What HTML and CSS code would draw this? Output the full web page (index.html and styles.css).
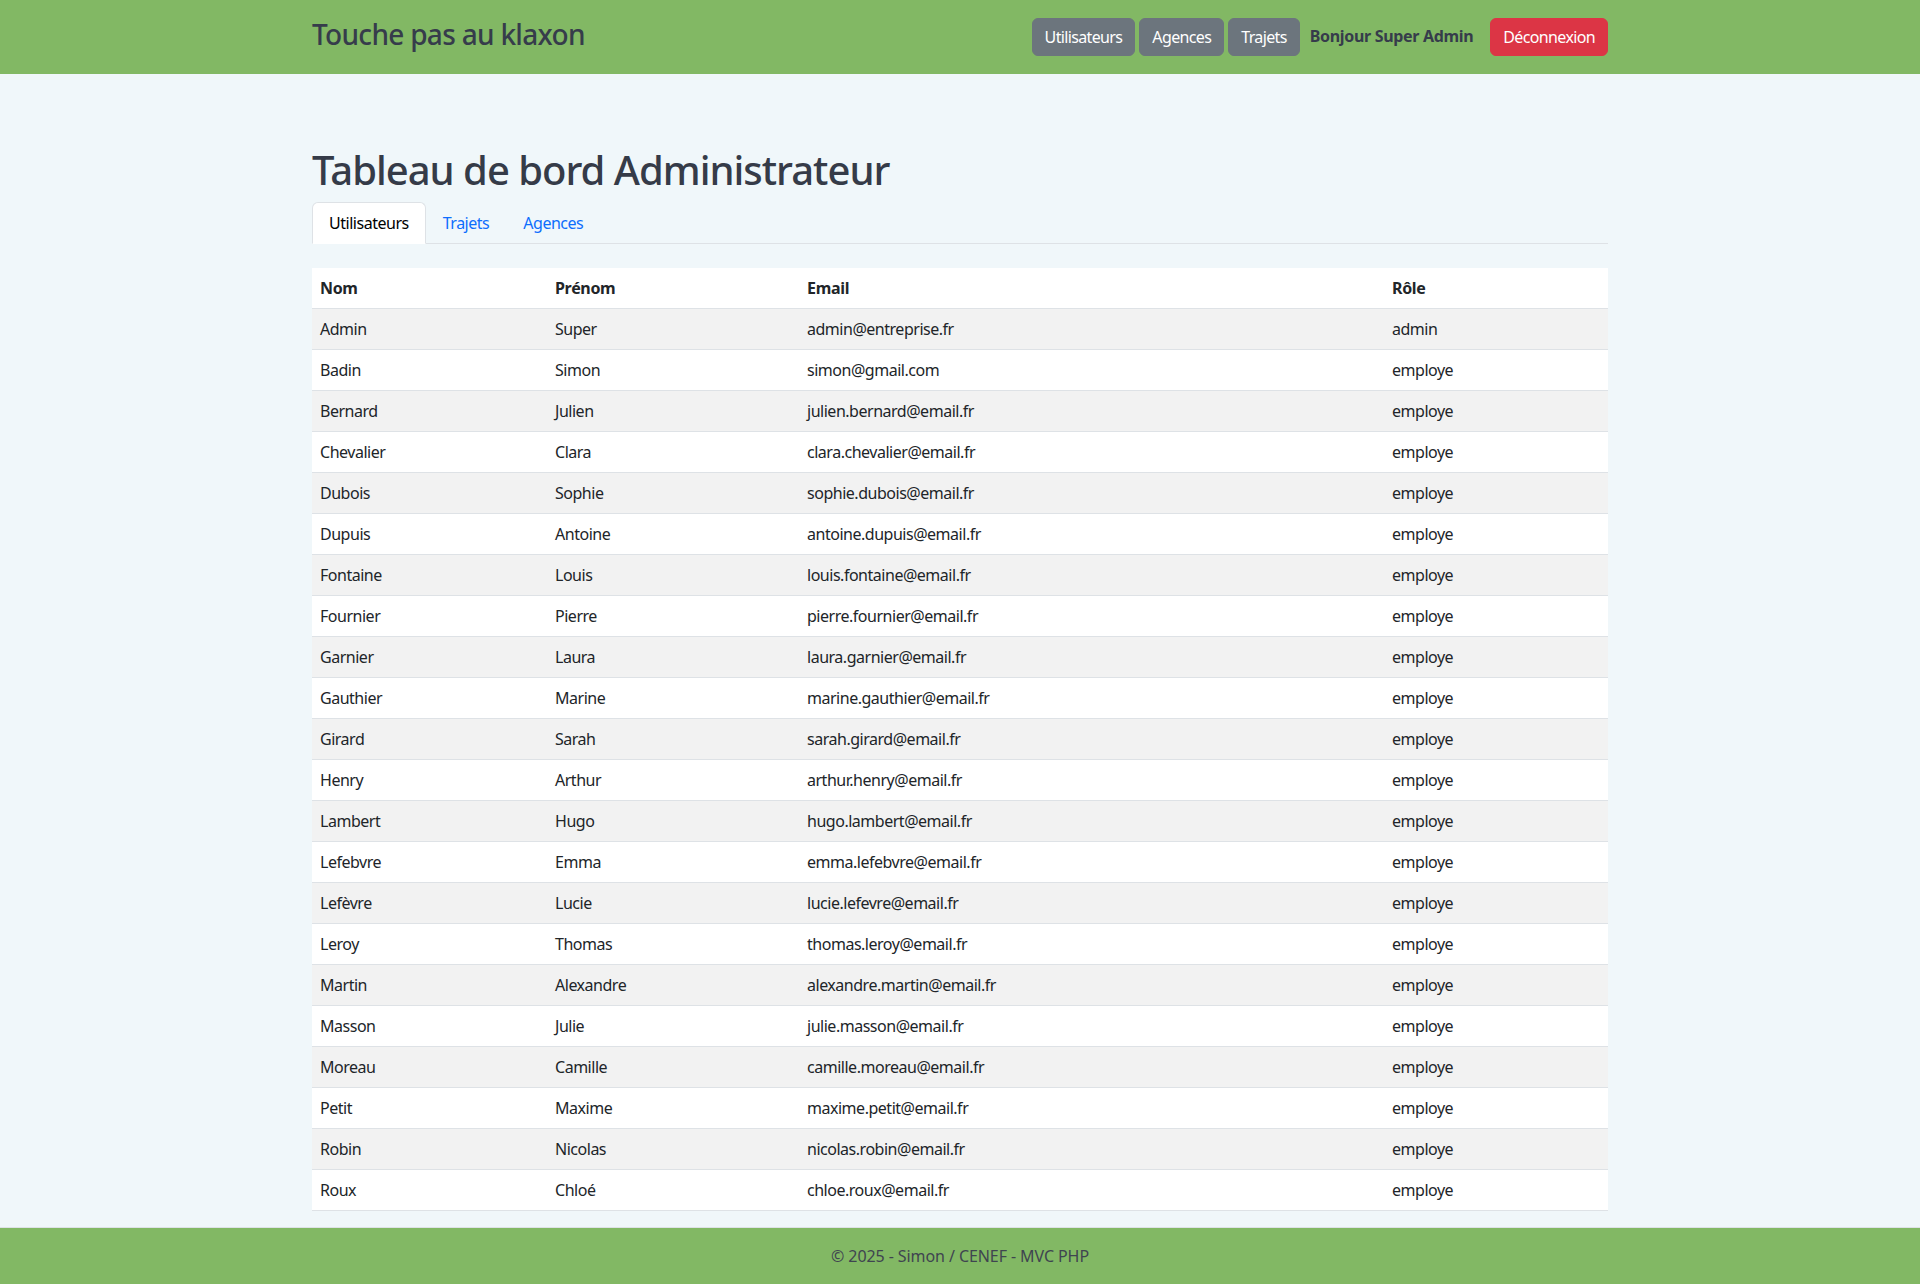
FILE: index.html
```html
<!DOCTYPE html>
<html lang="fr">
<head>
<meta charset="utf-8">
<title>Touche pas au klaxon - Administration</title>
<link rel="stylesheet" href="styles.css">
</head>
<body>
<header class="topbar">
  <div class="container topbar-inner">
    <a class="brand" href="#">Touche pas au klaxon</a>
    <nav class="topnav">
      <a class="btn btn-secondary" href="#">Utilisateurs</a>
      <a class="btn btn-secondary" href="#">Agences</a>
      <a class="btn btn-secondary" href="#">Trajets</a>
      <span class="hello">Bonjour Super Admin</span>
      <a class="btn btn-danger" href="#">Déconnexion</a>
    </nav>
  </div>
</header>

<main class="container main">
  <h1 class="title">Tableau de bord Administrateur</h1>
  <ul class="tabs">
    <li><a class="tab active" href="#">Utilisateurs</a></li>
    <li><a class="tab" href="#">Trajets</a></li>
    <li><a class="tab" href="#">Agences</a></li>
  </ul>

  <table class="table">
    <thead>
      <tr><th class="c-nom">Nom</th><th class="c-prenom">Prénom</th><th class="c-email">Email</th><th class="c-role">Rôle</th></tr>
    </thead>
    <tbody>
      <tr><td>Admin</td><td>Super</td><td>admin@entreprise.fr</td><td>admin</td></tr>
      <tr><td>Badin</td><td>Simon</td><td>simon@gmail.com</td><td>employe</td></tr>
      <tr><td>Bernard</td><td>Julien</td><td>julien.bernard@email.fr</td><td>employe</td></tr>
      <tr><td>Chevalier</td><td>Clara</td><td>clara.chevalier@email.fr</td><td>employe</td></tr>
      <tr><td>Dubois</td><td>Sophie</td><td>sophie.dubois@email.fr</td><td>employe</td></tr>
      <tr><td>Dupuis</td><td>Antoine</td><td>antoine.dupuis@email.fr</td><td>employe</td></tr>
      <tr><td>Fontaine</td><td>Louis</td><td>louis.fontaine@email.fr</td><td>employe</td></tr>
      <tr><td>Fournier</td><td>Pierre</td><td>pierre.fournier@email.fr</td><td>employe</td></tr>
      <tr><td>Garnier</td><td>Laura</td><td>laura.garnier@email.fr</td><td>employe</td></tr>
      <tr><td>Gauthier</td><td>Marine</td><td>marine.gauthier@email.fr</td><td>employe</td></tr>
      <tr><td>Girard</td><td>Sarah</td><td>sarah.girard@email.fr</td><td>employe</td></tr>
      <tr><td>Henry</td><td>Arthur</td><td>arthur.henry@email.fr</td><td>employe</td></tr>
      <tr><td>Lambert</td><td>Hugo</td><td>hugo.lambert@email.fr</td><td>employe</td></tr>
      <tr><td>Lefebvre</td><td>Emma</td><td>emma.lefebvre@email.fr</td><td>employe</td></tr>
      <tr><td>Lefèvre</td><td>Lucie</td><td>lucie.lefevre@email.fr</td><td>employe</td></tr>
      <tr><td>Leroy</td><td>Thomas</td><td>thomas.leroy@email.fr</td><td>employe</td></tr>
      <tr><td>Martin</td><td>Alexandre</td><td>alexandre.martin@email.fr</td><td>employe</td></tr>
      <tr><td>Masson</td><td>Julie</td><td>julie.masson@email.fr</td><td>employe</td></tr>
      <tr><td>Moreau</td><td>Camille</td><td>camille.moreau@email.fr</td><td>employe</td></tr>
      <tr><td>Petit</td><td>Maxime</td><td>maxime.petit@email.fr</td><td>employe</td></tr>
      <tr><td>Robin</td><td>Nicolas</td><td>nicolas.robin@email.fr</td><td>employe</td></tr>
      <tr><td>Roux</td><td>Chloé</td><td>chloe.roux@email.fr</td><td>employe</td></tr>
    </tbody>
  </table>
</main>

<footer class="footer">© 2025 - Simon / CENEF - MVC PHP</footer>
</body>
</html>
```

FILE: styles.css
```css
* { box-sizing: border-box; }

html, body { margin: 0; padding: 0; }

body {
  font-family: "Noto Sans", "Open Sans", sans-serif;
  font-size: 16px;
  line-height: 1.5;
  letter-spacing: -0.03em;
  color: #212529;
  background: #f0f7fa;
  min-height: 100vh;
  display: flex;
  flex-direction: column;
}

.container {
  width: 1320px;
  margin: 0 auto;
  padding: 0 12px;
}

.topbar {
  background: #82b864;
  height: 74px;
}

.topbar-inner {
  height: 100%;
  display: flex;
  align-items: center;
  justify-content: space-between;
}

.brand {
  font-size: 28px;
  line-height: 1.2;
  font-weight: 500;
  letter-spacing: -0.025em;
  color: #363c4b;
  text-decoration: none;
  margin-top: -4px;
}

.topnav {
  display: flex;
  align-items: center;
  gap: 4px;
}

.btn {
  display: inline-block;
  padding: 6px 12px;
  border-radius: 6px;
  font-size: 16px;
  line-height: 24px;
  letter-spacing: -0.04em;
  text-decoration: none;
  color: #fff;
  border: 1px solid transparent;
}

.btn-secondary { background: #6c757d; border-color: #6c757d; }
.btn-danger { background: #dc3545; border-color: #dc3545; }

.hello {
  font-weight: 700;
  letter-spacing: -0.02em;
  color: #363c4b;
  margin: 0 13px 0 6px;
  padding-bottom: 2px;
}

.main {
  flex: 1;
  padding-top: 72px;
  padding-bottom: 16px;
}

.title {
  margin: 0 0 8px;
  font-size: 40px;
  line-height: 1.2;
  font-weight: 500;
  letter-spacing: -0.025em;
  color: #353b48;
}

.tabs {
  list-style: none;
  margin: 0;
  padding: 0;
  display: flex;
  border-bottom: 1px solid #dee2e6;
}

.tabs li { margin-bottom: -1px; }

.tab {
  display: block;
  padding: 8px 16px;
  font-size: 16px;
  line-height: 24px;
  color: #0d6efd;
  text-decoration: none;
  border: 1px solid transparent;
  border-radius: 6px 6px 0 0;
}

.tab.active {
  color: #000;
  background: #fff;
  border-color: #dee2e6 #dee2e6 #fff;
}

.table {
  width: 100%;
  margin-top: 24px;
  border-collapse: collapse;
  background: #fff;
}

.table th, .table td {
  padding: 8px;
  text-align: left;
  border-bottom: 1px solid #dee2e6;
  line-height: 24px;
  color: #212529;
}

.table th { font-weight: 700; letter-spacing: -0.02em; }

.table tbody tr:nth-child(odd) td { background: #f2f2f2; }

.c-nom { width: 235px; }
.c-prenom { width: 252px; }
.c-email { width: 585px; }
.c-role { width: 224px; }

.footer {
  background: #82b864;
  border-top: 1px solid #dee2e6;
  padding: 16px 0;
  text-align: center;
  letter-spacing: -0.005em;
  color: #3f4450;
  line-height: 24px;
}
```
